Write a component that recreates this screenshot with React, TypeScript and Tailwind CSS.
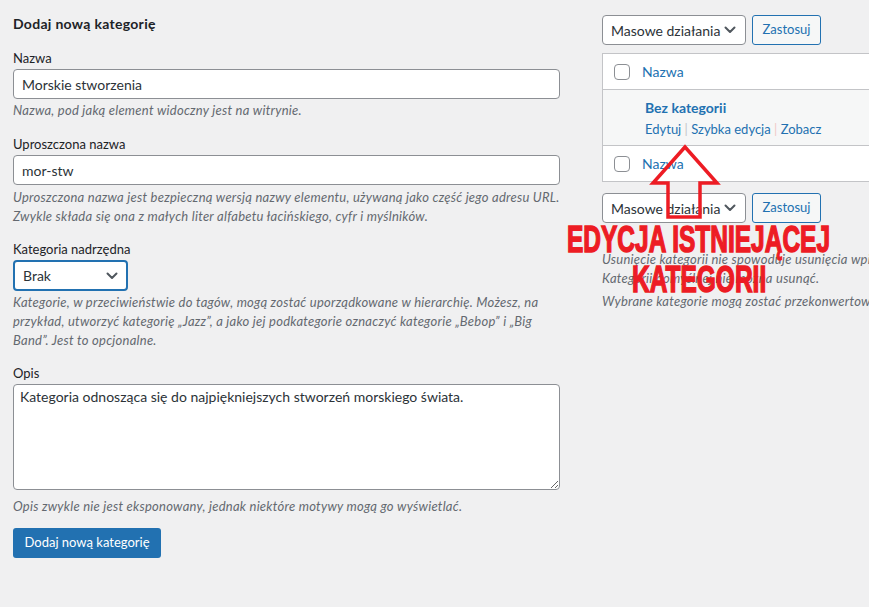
import React from 'react';

const font = "font-['Lato','Noto_Sans','Liberation_Sans',sans-serif]";

function Chevron() {
  return (
    <svg width="12" height="8" viewBox="0 0 12 8" className="shrink-0">
      <path d="M1.5 1.5 L6 6 L10.5 1.5" fill="none" stroke="#50575e" strokeWidth="2" strokeLinecap="round" strokeLinejoin="round" />
    </svg>
  );
}

function Checkbox() {
  return <div className="w-4 h-4 rounded-[4px] border border-[#8c8f94] bg-white shrink-0" />;
}

function BulkActions() {
  return (
    <div className="flex h-[30px] gap-[6px]">
      <div className="w-[144px] h-full flex items-center justify-between pl-[8px] pr-[9px] bg-white border border-[#8c8f94] rounded-[4px] text-[14px] text-[#2c3338]">
        <span>Masowe działania</span>
        <Chevron />
      </div>
      <div className="w-[69px] h-full flex items-center justify-center bg-[#f6f7f7] border border-[#2271b1] rounded-[3px] text-[13px] text-[#2271b1]">
        Zastosuj
      </div>
    </div>
  );
}

function Label({ children }: { children: React.ReactNode }) {
  return <div className="text-[13px] leading-[20px] text-[#1d2327]">{children}</div>;
}

function Help({ children, className = '' }: { children: React.ReactNode; className?: string }) {
  return (
    <p className={`text-[13px] leading-[19px] italic tracking-[0.25px] whitespace-nowrap text-[#646970] ${className}`}>
      {children}
    </p>
  );
}

export default function App() {
  return (
    <div className={`relative w-[869px] h-[607px] overflow-hidden bg-[#f0f0f1] ${font}`}>
      <div className="flex">
        {/* lewa kolumna: formularz */}
        <div className="ml-[13px] w-[547px] shrink-0 pt-[14px]">
          <h2 className="text-[14px] leading-[20px] font-bold tracking-[0.3px] text-[#1d2327]">Dodaj nową kategorię</h2>

          <div className="mt-[14px]">
            <Label>Nazwa</Label>
            <input
              readOnly
              defaultValue="Morskie stworzenia"
              className="mt-[1px] block w-full h-[30px] px-[8px] bg-white border border-[#8c8f94] rounded-[4px] text-[14px] text-[#2c3338] outline-none"
            />
            <Help className="mt-[2px]">Nazwa, pod jaką element widoczny jest na witrynie.</Help>
          </div>

          <div className="mt-[14px]">
            <Label>Uproszczona nazwa</Label>
            <input
              readOnly
              defaultValue="mor-stw"
              className="mt-[1px] block w-full h-[30px] px-[8px] bg-white border border-[#8c8f94] rounded-[4px] text-[14px] text-[#2c3338] outline-none"
            />
            <Help className="mt-[3px]">
              Uproszczona nazwa jest bezpieczną wersją nazwy elementu, używaną jako część jego adresu URL.
              <br />
              Zwykle składa się ona z małych liter alfabetu łacińskiego, cyfr i myślników.
            </Help>
          </div>

          <div className="mt-[13px]">
            <Label>Kategoria nadrzędna</Label>
            <div className="mt-[1px] w-[115px] h-[31px] flex items-center justify-between pl-[8px] pr-[8px] bg-white border-2 border-[#2271b1] rounded-[4px] text-[14px] text-[#2c3338]">
              <span>Brak</span>
              <Chevron />
            </div>
            <Help className="mt-[2px]">
              Kategorie, w przeciwieństwie do tagów, mogą zostać uporządkowane w hierarchię. Możesz, na
              <br />
              przykład, utworzyć kategorię „Jazz”, a jako jej podkategorie oznaczyć kategorie „Bebop” i „Big
              <br />
              Band”. Jest to opcjonalne.
            </Help>
          </div>

          <div className="mt-[13px]">
            <Label>Opis</Label>
            <textarea
              readOnly
              defaultValue="Kategoria odnosząca się do najpiękniejszych stworzeń morskiego świata."
              className="mt-[1px] block w-full h-[106px] px-[6px] py-[2px] bg-white border border-[#8c8f94] rounded-[4px] text-[14px] leading-[20px] text-[#2c3338] outline-none"
            />
            <Help className="mt-[7px]">Opis zwykle nie jest eksponowany, jednak niektóre motywy mogą go wyświetlać.</Help>
          </div>

          <button className="mt-[12px] w-[148px] h-[30px] bg-[#2271b1] rounded-[3px] text-[13px] text-white">
            Dodaj nową kategorię
          </button>
        </div>

        {/* prawa kolumna: lista */}
        <div className="ml-[42px] w-[420px] shrink-0 pt-[15px]">
          <BulkActions />

          <div className="mt-[8px] bg-white border border-[#c3c4c7] text-[14px]">
            <div className="h-[36px] flex items-center pl-[11px] gap-[12px] border-b border-[#c3c4c7]">
              <Checkbox />
              <span className="text-[#2271b1]">Nazwa</span>
            </div>
            <div className="h-[56px] bg-[#f6f7f7] pl-[42px] pt-[8px] border-b border-[#c3c4c7]">
              <div className="leading-[20px] font-bold text-[#2271b1]">Bez kategorii</div>
              <div className="mt-[1px] leading-[20px] text-[13px] text-[#2271b1]">
                Edytuj <span className="text-[#c3c4c7]">|</span> Szybka edycja{' '}
                <span className="text-[#f0c8c8]">|</span> Zobacz
              </div>
            </div>
            <div className="h-[35px] flex items-center pl-[11px] gap-[12px]">
              <Checkbox />
              <span className="text-[#2271b1]">Nazwa</span>
            </div>
          </div>

          <div className="mt-[11px]">
            <BulkActions />
          </div>

          <div className="mt-[27px]">
            <Help>
              Usunięcie kategorii nie spowoduje usunięcia wpisów z tej kategorii.
              <br />
              Kategorii domyślnej nie można usunąć.
            </Help>
            <Help className="mt-[4px]">Wybrane kategorie mogą zostać przekonwertowane na tagi.</Help>
          </div>
        </div>
      </div>

      {/* adnotacja: strzałka */}
      <svg width="80" height="85" viewBox="645 140 80 85" className="absolute left-[645px] top-[140px] pointer-events-none">
        <polygon
          points="685,147 717,183 700,183 700,217 668,217 668,183 653,183"
          fill="none"
          stroke="#ed1c24"
          strokeWidth="3.5"
          strokeLinejoin="miter"
        />
      </svg>

      {/* adnotacja: napis */}
      <div className="absolute left-[567px] top-[222px] origin-top-left scale-x-[0.68] whitespace-nowrap font-['Liberation_Sans',sans-serif] font-bold text-[36px] leading-none text-[#ed1c24] [-webkit-text-stroke:1.5px_#ed1c24]">
        EDYCJA ISTNIEJĄCEJ
      </div>
      <div className="absolute left-[632px] top-[262px] origin-top-left scale-x-[0.68] whitespace-nowrap font-['Liberation_Sans',sans-serif] font-bold text-[36px] leading-none text-[#ed1c24] [-webkit-text-stroke:1.5px_#ed1c24]">
        KATEGORII
      </div>
    </div>
  );
}
